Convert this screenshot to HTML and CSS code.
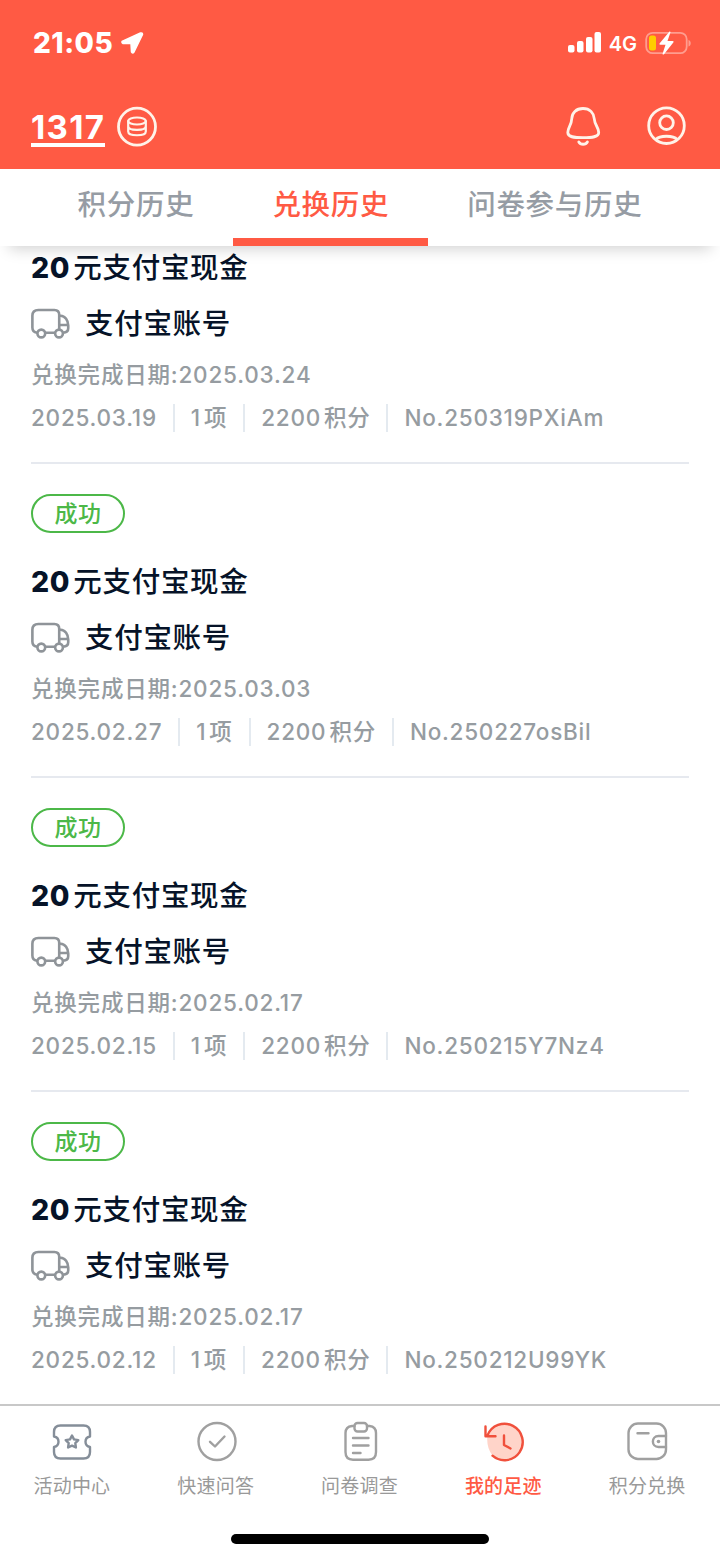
FILE: index.html
```html
<!DOCTYPE html>
<html lang="zh-CN">
<head>
<meta charset="UTF-8" />
<meta name="viewport" content="width=device-width, initial-scale=1.0"/>
<title>兑换历史</title>
<link rel="stylesheet" href="styles.css">
</head>
<body>

<!-- shared icon for every order -->
<svg class="sprite" width="0" height="0">
  <symbol id="truck" viewBox="0 0 40 32">
    <path d="M6 25.500C3 25 1.300 23 1.300 20V8C1.300 4 3.500 2 7.500 2H24C27.500 2 29 4 29 7V25.500M10 25.500H29M29 8H30.500C35 8 38.300 13 38.300 18V21C38.300 23.500 36.500 25.500 33 25.500H29M38 17.500H29"/>
    <circle class="wheel" cx="10.500" cy="26.300" r="4"/>
    <circle class="wheel" cx="28.800" cy="26.300" r="4"/>
  </symbol>
</svg>

<div class="app">
  <header class="header">
    <div class="status">
      <div class="status-left">
        <span class="time">21:05</span>
        <svg class="location" width="26" height="26" viewBox="0 0 26 26"><path d="M21.500 3L3 11.500Q2.500 13 4 13.500H12L12.500 22Q13.500 24 15 22L23.500 4.500Q23.500 2.500 21.500 3Z"/></svg>
      </div>
      <div class="status-right">
        <svg class="signal" width="34" height="22" viewBox="0 0 34 22">
          <rect x="0" y="13" width="6.500" height="7.500" rx="2"/>
          <rect x="9" y="9" width="6.500" height="11.500" rx="2"/>
          <rect x="18" y="5" width="6.500" height="15.500" rx="2"/>
          <rect x="26.500" y="0" width="6.500" height="20.500" rx="2"/>
        </svg>
        <span class="network">4G</span>
        <svg class="battery" width="48" height="26" viewBox="0 0 48 26">
          <rect class="battery-case" x="1.200" y="2.800" width="40.500" height="20.400" rx="6.500"/>
          <path class="battery-cap" d="M43.500 10V16.500C46.500 15.500 46.500 11 43.500 10Z"/>
          <rect class="battery-level" x="4" y="5.500" width="7" height="15" rx="2.500"/>
          <path class="bolt" d="M24.500 1.500L14.500 13.500Q14 14.800 15.500 14.800H20.500L17.500 24Q18 25 19 24.300L28.500 12.300Q29 11 27.500 11H22.500L25.500 2.300Q25.400 1.200 24.500 1.500Z"/>
        </svg>
      </div>
    </div>
    <div class="topbar">
      <div class="points">
        <span class="points-value">1317</span>
        <svg class="line-icon" width="42" height="42" viewBox="0 0 42 42">
          <circle cx="21" cy="20.700" r="18.500"/>
          <g class="coins">
            <ellipse cx="21" cy="15" rx="8.800" ry="3.500"/>
            <path d="M12.200 15V25.500C12.200 30.500 29.800 30.500 29.800 25.500V15M12.200 20.200C12.200 25 29.800 25 29.800 20.200"/>
          </g>
        </svg>
      </div>
      <div class="actions">
        <svg class="line-icon" width="42" height="42" viewBox="0 0 42 42">
          <path d="M21 2.500C14 2.500 10 7 9.800 12.500C9.500 19.500 5.800 21 5.800 26.500C5.800 31 11.500 31.700 21 31.700S36.700 31 36.700 26.500C36.700 21 32.700 19.500 32.200 12.500C31.700 7 28 2.500 21 2.500ZM16.800 36C18.500 39 23.700 39 25.400 36"/>
        </svg>
        <svg class="line-icon" width="42" height="42" viewBox="0 0 42 42">
          <circle cx="20.500" cy="19.700" r="17.800"/>
          <circle cx="20.500" cy="16.700" r="6.800"/>
          <path d="M10 33.300C13.500 29.200 27.500 29.200 31 33.300"/>
        </svg>
      </div>
    </div>
  </header>

  <nav class="tabs">
    <a class="tab">积分历史</a>
    <a class="tab active">兑换历史</a>
    <a class="tab">问卷参与历史</a>
  </nav>

  <main class="orders">
    <article class="order">
      <h2 class="title"><b>20</b>元支付宝现金</h2>
      <div class="account"><svg class="truck"><use href="#truck"/></svg><span>支付宝账号</span></div>
      <div class="done">兑换完成日期:2025.03.24</div>
      <div class="meta"><span>2025.03.19</span><span><i>1</i>项</span><span><i>2200</i>积分</span><span>No.250319PXiAm</span></div>
    </article>
    <article class="order">
      <div class="badge">成功</div>
      <h2 class="title"><b>20</b>元支付宝现金</h2>
      <div class="account"><svg class="truck"><use href="#truck"/></svg><span>支付宝账号</span></div>
      <div class="done">兑换完成日期:2025.03.03</div>
      <div class="meta"><span>2025.02.27</span><span><i>1</i>项</span><span><i>2200</i>积分</span><span>No.250227osBil</span></div>
    </article>
    <article class="order">
      <div class="badge">成功</div>
      <h2 class="title"><b>20</b>元支付宝现金</h2>
      <div class="account"><svg class="truck"><use href="#truck"/></svg><span>支付宝账号</span></div>
      <div class="done">兑换完成日期:2025.02.17</div>
      <div class="meta"><span>2025.02.15</span><span><i>1</i>项</span><span><i>2200</i>积分</span><span>No.250215Y7Nz4</span></div>
    </article>
    <article class="order">
      <div class="badge">成功</div>
      <h2 class="title"><b>20</b>元支付宝现金</h2>
      <div class="account"><svg class="truck"><use href="#truck"/></svg><span>支付宝账号</span></div>
      <div class="done">兑换完成日期:2025.02.17</div>
      <div class="meta"><span>2025.02.12</span><span><i>1</i>项</span><span><i>2200</i>积分</span><span>No.250212U99YK</span></div>
    </article>
  </main>

  <footer class="footer">
    <nav class="menu">
      <a class="menu-item">
        <svg class="ticket" width="42" height="42" viewBox="0 0 42 42">
          <path d="M9.500 4.500H32.500C36.500 4.500 39 7 39 11V15.500C33 16.500 33 25 39 26V31C39 35 36.500 37.500 32.500 37.500H9.500C5.500 37.500 3 35 3 31V26C9 25 9 16.500 3 15.500V11C3 7 5.500 4.500 9.500 4.500Z"/>
          <path d="M21 14.500L23 18.400L27.300 19.100L24.300 22.200L24.900 26.500L21 24.600L17.100 26.500L17.700 22.200L14.700 19.100L19 18.400Z"/>
        </svg>
        <span>活动中心</span>
      </a>
      <a class="menu-item">
        <svg width="42" height="42" viewBox="0 0 42 42">
          <circle cx="22" cy="20.500" r="18.500"/>
          <path d="M15 20.800L20 25.500L29.500 15.500"/>
        </svg>
        <span>快速问答</span>
      </a>
      <a class="menu-item">
        <svg width="42" height="42" viewBox="0 0 42 42">
          <path d="M16.500 5H14C9.500 5.500 7.500 8 7.500 12V31C7.500 36 10 38.700 15 38.700H30.500C35.500 38.700 38 36 38 31V12C38 8 36 5.500 31.500 5H29"/>
          <rect x="16.500" y="2" width="12.500" height="8.500" rx="3"/>
          <path d="M15 17H30.500M15 24.500H30.500M15 32H22.500"/>
        </svg>
        <span>问卷调查</span>
      </a>
      <a class="menu-item current">
        <svg width="42" height="42" viewBox="0 0 42 42">
          <path class="fill" d="M5.500 14.500A18 18 0 1 1 10.500 34.500Q4 26 5.500 14.500Z"/>
          <path d="M5.500 14.500A18.200 18.200 0 1 1 10.500 34.700M3.500 5.500V15.200H13.500M22 14.500V24L28.500 27.500"/>
        </svg>
        <span>我的足迹</span>
      </a>
      <a class="menu-item">
        <svg width="42" height="42" viewBox="0 0 42 42">
          <rect x="2.500" y="2.500" width="37.500" height="35.500" rx="9.500"/>
          <path d="M11.500 12.200H22.500M40 15H32.500C25 15 25 26 32.500 26H40"/>
          <circle class="dot" cx="32.500" cy="20.500" r="1.800"/>
        </svg>
        <span>积分兑换</span>
      </a>
    </nav>
    <div class="home-bar"></div>
  </footer>
</div>

</body>
</html>
```
FILE: styles.css
```css
* {
  box-sizing: border-box;
}
body {
  margin: 0;
  background-color: #fff;
  font-family: Inter, "Noto Sans CJK SC", sans-serif;
  font-weight: 500;
  color: #061328;
}
svg {
  flex: none;
  fill: none;
  stroke-linecap: round;
  stroke-linejoin: round;
}
.sprite {
  display: block;
}
.app {
  display: flex;
  flex-direction: column;
  height: 1559px;
  overflow: hidden;
  white-space: nowrap;
}

/* header */
.header {
  flex: none;
  height: 169px;
  background-color: #ff5a44;
  color: #fff;
}
.status {
  display: flex;
  justify-content: space-between;
  height: 86px;
  padding: 0 27px 0 33px;
}
.status-left, .status-right {
  display: flex;
  align-items: center;
}
.time {
  font-size: 28px;
  font-weight: 800;
  letter-spacing: 0.5px;
}
.location {
  margin-left: 6px;
  fill: #fff;
  stroke: #fff;
  stroke-width: 1.5;
}
.signal {
  fill: #fff;
}
.network {
  margin: 2px 8px 0 7px;
  font-size: 20px;
  font-weight: 600;
}
.battery-case {
  stroke: #ff9d8f;
  stroke-width: 1.8;
}
.battery-cap {
  fill: #ff9d8f;
}
.battery-level {
  fill: #ffcc00;
}
.bolt {
  fill: #fff;
}
.topbar {
  display: flex;
  align-items: center;
  justify-content: space-between;
  height: 82px;
  padding: 0 32px 0 31px;
}
.points, .actions {
  display: flex;
  align-items: center;
}
.points {
  gap: 11px;
}
.actions {
  gap: 42px;
}
.points-value {
  margin-top: 3px;
  border-bottom: 4px solid #fff;
  font-size: 33px;
  font-weight: 700;
  letter-spacing: 1.3px;
  line-height: 32px;
}
.line-icon {
  stroke: #fff3e9;
  stroke-width: 2.8;
}
.coins {
  stroke-width: 2.2;
}

/* tabs */
.tabs {
  position: relative;
  z-index: 1;
  display: flex;
  flex: none;
  justify-content: center;
  height: 77px;
  background-color: #fff;
  box-shadow: 0 12px 14px -9px rgba(0,0,0,0.18);
}
.tab {
  padding: 0 39px;
  border-bottom: 8px solid transparent;
  color: #969ca4;
  font-size: 28.5px;
  letter-spacing: 0.7px;
  line-height: 71px;
}
.tab.active {
  border-color: #ff5a44;
  color: #ff5a44;
}

/* orders */
.orders {
  flex: 1;
  min-height: 0;
  overflow: hidden;
  padding: 0 31px;
}
.order {
  height: 314px;
  padding-top: 30px;
  border-bottom: 2px solid #e6e9ef;
}
.order:first-child {
  height: 218px;
  padding-top: 0;
}
.order:last-child {
  border: none;
}
.badge {
  width: 94px;
  height: 39px;
  margin-bottom: 27px;
  border: 2px solid #4cb848;
  border-radius: 20px;
  color: #4cb848;
  font-size: 23px;
  letter-spacing: 0.5px;
  line-height: 36px;
  text-align: center;
}
.title {
  margin: 0;
  font-size: 28.5px;
  font-weight: 500;
  letter-spacing: 0.7px;
  line-height: 44px;
}
.title b {
  margin-right: 3px;
  font-weight: 800;
}
.account {
  display: flex;
  align-items: center;
  height: 44px;
  margin-top: 11px;
  font-size: 28.5px;
  letter-spacing: 0.7px;
}
.account span {
  padding-bottom: 4px;
}
.truck {
  width: 39px;
  height: 31px;
  margin-right: 15px;
  stroke: #8f9499;
  stroke-width: 2.7;
}
.wheel {
  fill: #fff;
}
.done {
  height: 30px;
  margin-top: 15px;
  color: #969ca1;
  font-size: 22.5px;
  letter-spacing: 0.8px;
  line-height: 30px;
}
.meta {
  display: flex;
  height: 28px;
  margin-top: 14px;
  color: #969ca1;
  font-size: 22.5px;
  letter-spacing: 0.75px;
  line-height: 28px;
}
.meta span + span {
  margin-left: 16px;
  padding-left: 16px;
  border-left: 2px solid #e4eaf0;
}
.meta i {
  margin-right: 3px;
  font-style: normal;
}

/* bottom menu */
.footer {
  flex: none;
  height: 155px;
  border-top: 2px solid #c8c8c8;
  background-color: #fff;
}
.menu {
  display: grid;
  grid-template-columns: repeat(5, 1fr);
  padding: 15px 1px 0 0;
}
.menu-item {
  display: flex;
  flex-direction: column;
  align-items: center;
  gap: 9px;
  color: #999;
  font-size: 19px;
  font-weight: 400;
  letter-spacing: 0.2px;
  line-height: 30px;
}
.menu-item svg {
  stroke: #a0a0a0;
  stroke-width: 2.4;
}
.menu-item .ticket {
  stroke: #858e99;
}
.menu-item .dot {
  fill: #a0a0a0;
  stroke: none;
}
.menu-item.current {
  color: #ff5a44;
  font-weight: 500;
}
.menu-item.current svg {
  stroke: #f0503c;
}
.menu-item .fill {
  fill: #ffd4c9;
  stroke: none;
}
.home-bar {
  width: 258px;
  height: 10px;
  margin: 32px auto 0;
  border-radius: 5px;
  background-color: #000;
}
```
